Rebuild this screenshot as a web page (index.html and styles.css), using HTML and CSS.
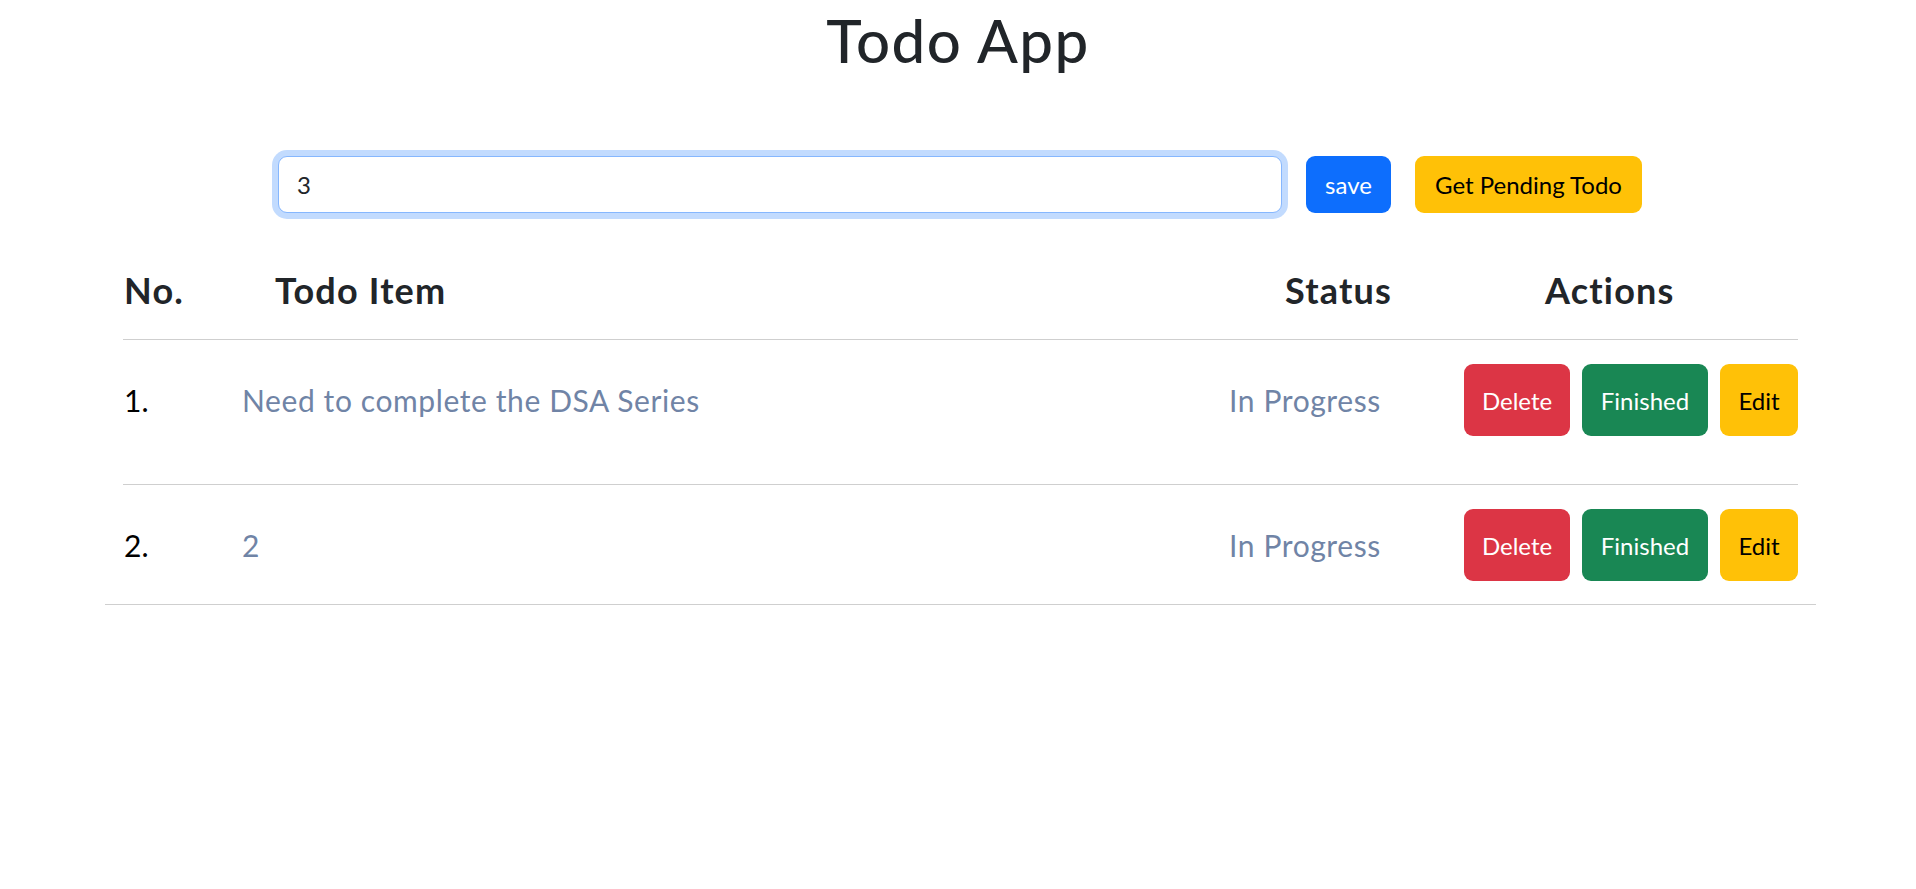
FILE: index.html
```html
<!DOCTYPE html>
<html lang="en">
<head>
<meta charset="utf-8">
<title>Todo App</title>
<link rel="stylesheet" href="styles.css">
</head>
<body>
<div class="app">
  <h1 class="title">Todo App</h1>
  <div class="form-row">
    <input class="todo-input" type="text" value="3">
    <button class="btn btn-primary btn-save">save</button>
    <button class="btn btn-warning btn-pending">Get Pending Todo</button>
  </div>
  <div class="table">
    <div class="table-inner">
      <div class="row head">
        <div class="c-no">No.</div>
        <div class="c-item">Todo Item</div>
        <div class="c-status">Status</div>
        <div class="c-actions">Actions</div>
      </div>
      <div class="row item first">
        <div class="c-no num">1.</div>
        <div class="c-item text">Need to complete the DSA Series</div>
        <div class="c-status text">In Progress</div>
        <div class="c-actions btns">
          <button class="btn btn-danger btn-delete">Delete</button>
          <button class="btn btn-success btn-finished">Finished</button>
          <button class="btn btn-warning btn-edit">Edit</button>
        </div>
      </div>
      <div class="row item last">
        <div class="c-no num">2.</div>
        <div class="c-item text">2</div>
        <div class="c-status text">In Progress</div>
        <div class="c-actions btns">
          <button class="btn btn-danger btn-delete">Delete</button>
          <button class="btn btn-success btn-finished">Finished</button>
          <button class="btn btn-warning btn-edit">Edit</button>
        </div>
      </div>
    </div>
  </div>
</div>
</body>
</html>
```
FILE: styles.css
```css
* { box-sizing: border-box; }
html, body { margin: 0; padding: 0; background: #fff; }
body {
  font-family: Lato, "Noto Sans", "Liberation Sans", sans-serif;
  color: #212529;
  font-size: 24px;
}
.app { padding-top: 4px; }
.title {
  margin: 0;
  text-align: center;
  font-size: 60px;
  line-height: 72px;
  font-weight: 500;
  letter-spacing: 1.5px;
  color: #212529;
}
.form-row {
  display: flex;
  justify-content: center;
  gap: 24px;
  margin-top: 80px;
  padding-left: 4px;
}
.todo-input {
  width: 1004px;
  height: 57px;
  border: 1px solid #86b7fe;
  border-radius: 9px;
  box-shadow: 0 0 0 6px rgba(13, 110, 253, 0.25);
  padding: 0 18px;
  font-family: inherit;
  font-size: 24px;
  color: #212529;
  outline: none;
}
.btn {
  border: none;
  border-radius: 9px;
  font-family: inherit;
  font-size: 24px;
  padding: 0 18px;
  cursor: pointer;
}
.btn-primary { background: #0d6efd; color: #fff; }
.btn-warning { background: #ffc107; color: #000; }
.btn-danger { background: #dc3545; color: #fff; }
.btn-success { background: #198754; color: #fff; }
.btn-save { width: 85px; height: 57px; padding: 0; }
.btn-pending { width: 227px; height: 57px; padding: 0; }

.table {
  margin: 50px 100px 0 105px;
  border-bottom: 1px solid #cfcfcf;
}
.table-inner { padding: 0 18px; }
.row {
  display: grid;
  grid-template-columns: 119px 1fr 240px 357px;
  align-items: center;
}
.head {
  font-size: 36px;
  font-weight: 700;
  line-height: 54px;
  letter-spacing: 1.2px;
  padding-bottom: 22px;
  border-bottom: 1px solid #cfcfcf;
}
.head .c-no { padding-left: 1px; }
.head .c-item { padding-left: 33px; }
.head .c-status { padding-left: 84px; }
.head .c-actions { padding-left: 104px; }
.item { font-size: 30px; }
.item.first { padding: 24px 0 48px; border-bottom: 1px solid #cfcfcf; }
.item.last { padding: 24px 0 23px; }
.num { color: #000; padding-left: 1px; }
.text { color: #7084a6; letter-spacing: 0.6px; }
.item .c-status { padding-left: 28px; }
.btns {
  display: flex;
  justify-content: flex-end;
  gap: 12px;
}
.btns .btn { height: 72px; padding: 0; }
.btn-delete { width: 106px; }
.btn-finished { width: 126px; }
.btn-edit { width: 78px; }
```
